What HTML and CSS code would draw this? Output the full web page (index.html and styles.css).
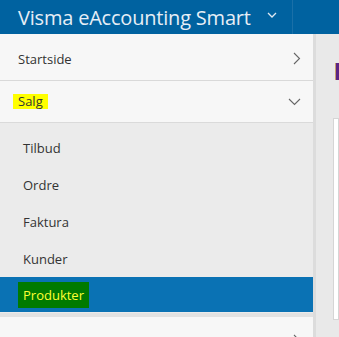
FILE: index.html
```html
<!DOCTYPE html>
<html lang="en">
<head>
    <meta charset="UTF-8">
    <meta name="viewport" content="width=device-width, initial-scale=1.0">
    <title>Visma eAccounting Smart</title>
    <link rel="stylesheet" href="styles.css">
</head>
<body>
    <div class="topbar">
        <div class="brand">
            <span class="brand-name">Visma eAccounting Smart</span>
            <svg class="brand-caret" width="10" height="6" viewBox="0 0 10 6"><path d="M1 1 L5 5 L9 1" fill="none" stroke="#dfe9f2" stroke-width="1.3"/></svg>
        </div>
        <div class="topbar-rest"></div>
    </div>
    <div class="main">
        <div class="sidebar">
            <div class="item item-first">
                <span>Startside</span>
                <svg width="8" height="13" viewBox="0 0 8 13"><path d="M1 1 L6.5 6.5 L1 12" fill="none" stroke="#666" stroke-width="1.1"/></svg>
            </div>
            <div class="item item-open">
                <span class="mark-yellow">Salg</span>
                <svg width="13" height="8" viewBox="0 0 13 8"><path d="M1 1 L6.5 6.5 L12 1" fill="none" stroke="#666" stroke-width="1.1"/></svg>
            </div>
            <div class="submenu">
                <div class="sub">Tilbud</div>
                <div class="sub">Ordre</div>
                <div class="sub">Faktura</div>
                <div class="sub">Kunder</div>
                <div class="sub sub-active"><span class="mark-green">Produkter</span></div>
            </div>
            <div class="item item-next">
                <span></span>
                <svg width="8" height="13" viewBox="0 0 8 13"><path d="M1 1 L6.5 6.5 L1 12" fill="none" stroke="#666" stroke-width="1.1"/></svg>
            </div>
        </div>
        <div class="content">
            <div class="title-bar"></div>
            <div class="panel"></div>
        </div>
    </div>
</body>
</html>
```

FILE: styles.css
```css
body {
    margin: 0;
    font-family: "Open Sans", "Liberation Sans", sans-serif;
    font-size: 13px;
    color: #333;
    background-color: #e9e9e9;
    overflow: hidden;
    height: 337px;
}
.topbar {
    display: flex;
    height: 34px;
    background-color: #0062a0;
}
.brand {
    width: 293px;
    display: flex;
    align-items: center;
    justify-content: space-between;
    padding: 0 15px 0 18px;
    box-sizing: border-box;
    border-right: 1px solid #1a70a8;
}
.brand-name {
    font-size: 20px;
    color: #e6eef6;
    letter-spacing: -0.2px;
}
.brand-caret {
    margin-top: -4px;
}
.topbar-rest {
    flex: 1;
}
.main {
    display: flex;
}
.sidebar {
    width: 315px;
    background-color: #f7f7f7;
}
.item {
    display: flex;
    align-items: center;
    justify-content: space-between;
    padding: 0 12px 0 18px;
    height: 46px;
    border-bottom: 1px solid #dadada;
}
.item-first {
    padding-top: 3px;
    height: 43px;
}
.item-open {
    height: 41px;
    padding-left: 13px;
    box-shadow: 0 1px 2px rgba(0, 0, 0, 0.08);
}
.mark-yellow {
    background-color: #ffff00;
    padding: 0 5px;
    line-height: 15px;
}
.submenu {
    background-color: #ebebeb;
    padding-top: 6px;
    border-bottom: 4px solid #e2e2e2;
}
.sub {
    height: 37px;
    display: flex;
    align-items: center;
    padding-left: 23px;
}
.sub-active {
    background-color: #0a72b4;
    padding-left: 18px;
    margin-bottom: 1px;
    height: 35px;
}
.mark-green {
    background-color: #007a00;
    color: #ffff33;
    padding: 4px 5px;
}
.item-next {
    border-bottom: none;
}
.content {
    flex: 1;
    border-left: 3px solid #dcdcdc;
    padding-top: 29px;
}
.title-bar {
    margin-left: 19px;
    width: 3px;
    height: 17px;
    background-color: #5b2585;
    border-left: 1px solid #c9a06a;
}
.panel {
    margin: 38px 0 0 17px;
    height: 200px;
    background-color: #fff;
    border: 1px solid #d5d5d5;
}
```
